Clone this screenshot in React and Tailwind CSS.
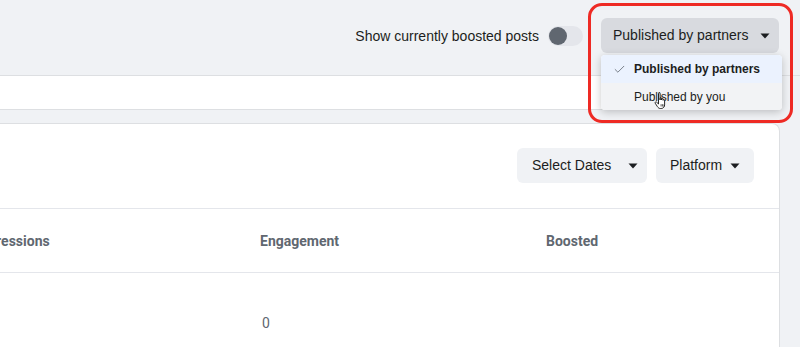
import { Check } from "lucide-react";

function Caret({ className = "" }) {
  return (
    <svg width="10" height="6" viewBox="0 0 10 6" className={className}>
      <path d="M0.5 0.5h9L5 5.5z" fill="#1c1e21" />
    </svg>
  );
}

function HandCursor() {
  return (
    <svg width="15" height="18" viewBox="0 0 15 18" className="absolute left-[53px] top-[37px]">
      <path
        d="M4.5 1.5c0-.9 1.6-.9 1.6 0V8V6.3c0-.9 1.5-.9 1.5 0V8V7c0-.9 1.5-.9 1.5 0v1.3V8.2c0-.9 1.5-.9 1.5 0v4.3c0 2.2-1.2 4-3.4 4H6.3c-1.4 0-2.2-.9-2.9-1.9L1.2 11.2c-.5-.8.5-1.7 1.3-1.1l2 1.9V1.5z"
        fill="#fff"
        stroke="#111"
        strokeWidth="0.9"
        strokeLinejoin="round"
      />
      <path d="M7.1 12.2v2.3M8.6 12.2v2.3M10.1 12.2v2.3" stroke="#111" strokeWidth="0.7" />
    </svg>
  );
}

export default function App() {
  const sans = "font-['Liberation_Sans',Arial,sans-serif]";
  const roboto = "font-['Roboto','Liberation_Sans',sans-serif]";

  return (
    <div className={`flex h-[347px] w-[800px] flex-col overflow-hidden bg-[#f0f2f5] ${sans}`}>
      {/* top filter bar */}
      <div className="flex h-[76px] shrink-0 items-start justify-end border-b border-[#dddfe2] pr-[21px] pt-[18px]">
        <span className="mt-[8px] text-[14px] leading-[20px] text-[#1c1e21]">Show currently boosted posts</span>
        <div className="ml-[9px] mt-[8px] h-[20px] w-[35px] rounded-full bg-[#e4e6eb] p-[1px]">
          <div className="h-[18px] w-[18px] rounded-full bg-[#606770]" />
        </div>
        <div className="relative ml-[18px]">
          <button className="flex h-[35px] w-[178px] items-center rounded-[6px] bg-[#d8dadf] pl-[12px] text-[14px] text-[#1c1e21]">
            Published by partners
            <Caret className="ml-[12px]" />
          </button>
          <div className="absolute left-0 top-[37px] w-[181px] rounded-[4px] bg-white shadow-[0_2px_8px_rgba(0,0,0,0.22)]">
            <div className="flex h-[28px] items-center rounded-t-[4px] bg-[#ebf2fe] pl-[12px] text-[12px] font-bold text-[#1c1e21]">
              <Check size={13} strokeWidth={1.5} className="text-[#606770]" />
              <span className="ml-[8px]">Published by partners</span>
            </div>
            <div className="flex h-[27px] items-center rounded-b-[4px] bg-[#f2f3f5] pl-[33px] text-[12px] text-[#1c1e21]">
              Published by you
            </div>
            <HandCursor />
          </div>
          <div className="pointer-events-none absolute left-[-13px] top-[-15px] h-[120px] w-[205px] rounded-[14px] border-[3px] border-[#ee2a24]" />
        </div>
      </div>

      {/* search strip */}
      <div className="mr-[20px] h-[34px] shrink-0 border-b border-[#dddfe2] bg-white" />

      {/* table card */}
      <div className="mr-[20px] mt-[13px] flex-1 rounded-tr-[8px] border-r border-t border-[#dddfe2] bg-white">
        <div className="flex justify-end gap-[9px] border-b border-[#e4e6eb] pb-[25px] pr-[25px] pt-[24px]">
          <button className="flex h-[35px] w-[130px] items-center rounded-[6px] bg-[#f0f2f5] pl-[15px] text-[14px] text-[#1c1e21]">
            Select Dates
            <Caret className="ml-[17px]" />
          </button>
          <button className="flex h-[35px] w-[98px] items-center rounded-[6px] bg-[#f0f2f5] pl-[14px] text-[14px] text-[#1c1e21]">
            Platform
            <Caret className="ml-[8px]" />
          </button>
        </div>
        <div className={`flex h-[64px] items-center border-b border-[#e4e6eb] pt-[2px] text-[14px] font-bold text-[#606770] ${roboto}`}>
          <div className="ml-[-28px] w-[288px] shrink-0">Impressions</div>
          <div className="w-[286px] shrink-0">Engagement</div>
          <div>Boosted</div>
        </div>
        <div className={`flex h-[100px] items-center text-[14px] text-[#606770] ${roboto}`}>
          <div className="w-[262px] shrink-0" />
          <div>0</div>
        </div>
      </div>
    </div>
  );
}
